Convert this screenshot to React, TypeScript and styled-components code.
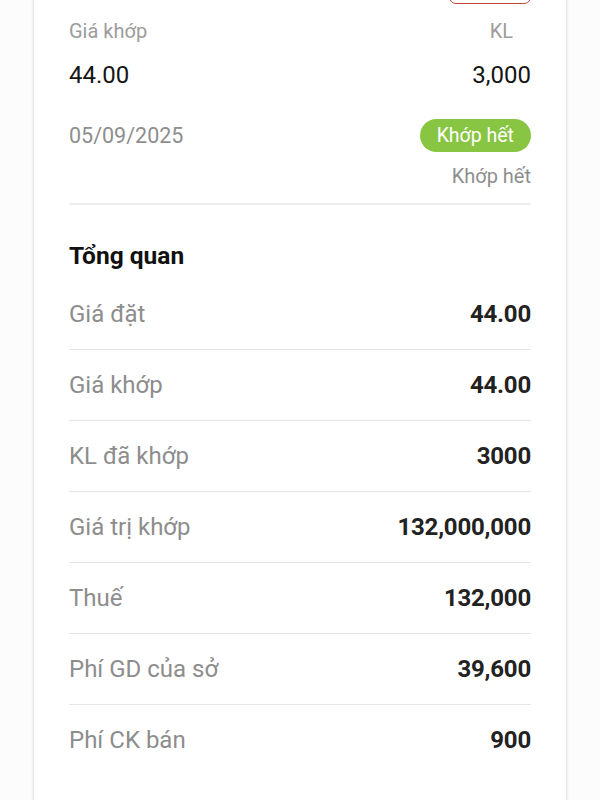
import React, { FC } from "react";
import styled, { createGlobalStyle } from "styled-components";

const GlobalStyle = createGlobalStyle`
  html, body {
    margin: 0;
    padding: 0;
    background: #fcfcfc;
    font-family: Roboto, "Noto Sans", "Liberation Sans", sans-serif;
    overflow: hidden;
  }
`;

const Page = styled.div`
  width: 600px;
  height: 800px;
  overflow: hidden;
`;

const Card = styled.div`
  margin: 0 34px;
  min-height: 830px;
  background: #ffffff;
  box-shadow: 0 0 3px rgba(0, 0, 0, 0.22);
  padding: 0 35px;
  box-sizing: border-box;
`;

const TopRow = styled.div`
  margin-top: -27px;
  height: 31px;
  display: flex;
  justify-content: space-between;
  align-items: flex-end;
`;

const Symbol = styled.span`
  font-size: 24px;
  font-weight: 700;
  color: #111;
  line-height: 26px;
`;

const SideWrap = styled.div`
  display: flex;
  align-items: flex-end;
  gap: 20px;
`;

const Qty = styled.span`
  font-size: 22px;
  color: #111;
  line-height: 26px;
`;

const SideTag = styled.span`
  width: 82px;
  height: 30px;
  border: 1.5px solid #c0453b;
  border-radius: 7px;
  box-sizing: border-box;
  color: #c0453b;
  font-size: 16px;
  display: flex;
  align-items: center;
  justify-content: center;
`;

const PairRow = styled.div<{ $top: number; $height: number }>`
  margin-top: ${(p) => p.$top}px;
  height: ${(p) => p.$height}px;
  display: flex;
  justify-content: space-between;
  align-items: center;
`;

const SmallLabel = styled.span<{ $inset?: number }>`
  font-size: 20px;
  color: #9c9c9c;
  margin-right: ${(p) => p.$inset ?? 0}px;
`;

const Value = styled.span`
  font-size: 24px;
  color: #151515;
`;

const DateText = styled.span`
  font-size: 21.5px;
  color: #8e8e8e;
`;

const Badge = styled.span`
  height: 33px;
  padding: 0 17px;
  border-radius: 17px;
  background: #88c543;
  color: #ffffff;
  font-size: 19.5px;
  display: flex;
  align-items: center;
`;

const StatusText = styled.div`
  margin-top: 12px;
  line-height: 24px;
  text-align: right;
  font-size: 20px;
  color: #8e8e8e;
`;

const Divider = styled.div`
  margin-top: 15px;
  height: 2px;
  background: #ececec;
`;

const SectionTitle = styled.h2`
  margin: 36px 0 8px;
  line-height: 30px;
  font-size: 24.5px;
  font-weight: 700;
  color: #111;
`;

const SummaryRow = styled.div<{ $last?: boolean }>`
  height: 70px;
  display: flex;
  justify-content: space-between;
  align-items: center;
  border-bottom: 1px solid ${(p) => (p.$last ? "transparent" : "#e6e6e6")};
`;

const RowLabel = styled.span`
  font-size: 24px;
  color: #8d8d8d;
`;

const RowValue = styled.span`
  font-size: 24px;
  font-weight: 700;
  color: #222;
  letter-spacing: -0.2px;
`;

const summary = [
  { label: "Giá đặt", value: "44.00" },
  { label: "Giá khớp", value: "44.00" },
  { label: "KL đã khớp", value: "3000" },
  { label: "Giá trị khớp", value: "132,000,000" },
  { label: "Thuế", value: "132,000" },
  { label: "Phí GD của sở", value: "39,600" },
  { label: "Phí CK bán", value: "900" },
];

const App: FC = () => {
  return (
    <Page>
      <GlobalStyle />
      <Card>
        <TopRow>
          <Symbol>SVC</Symbol>
          <SideWrap>
            <Qty>25</Qty>
            <SideTag>Bán</SideTag>
          </SideWrap>
        </TopRow>
        <PairRow $top={14} $height={26}>
          <SmallLabel>Giá khớp</SmallLabel>
          <SmallLabel $inset={18}>KL</SmallLabel>
        </PairRow>
        <PairRow $top={16} $height={30}>
          <Value>44.00</Value>
          <Value>3,000</Value>
        </PairRow>
        <PairRow $top={28} $height={34}>
          <DateText>05/09/2025</DateText>
          <Badge>Khớp hết</Badge>
        </PairRow>
        <StatusText>Khớp hết</StatusText>
        <Divider />
        <SectionTitle>Tổng quan</SectionTitle>
        {summary.map((row, idx) => (
          <SummaryRow key={row.label} $last={idx === summary.length - 1}>
            <RowLabel>{row.label}</RowLabel>
            <RowValue>{row.value}</RowValue>
          </SummaryRow>
        ))}
      </Card>
    </Page>
  );
};

export default App;
